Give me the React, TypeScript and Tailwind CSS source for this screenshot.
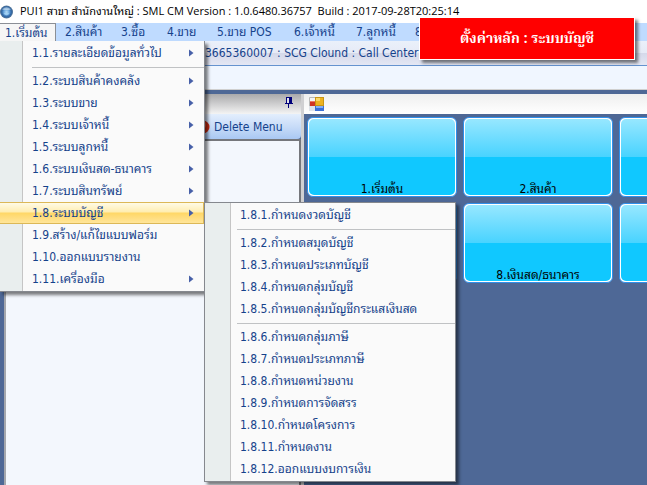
import React from "react";

type Entry = { label: string; sub?: boolean; active?: boolean; divider?: boolean };

const menuBar = [
  { label: "1.เริ่มต้น", width: "w-[56px]", active: true },
  { label: "2.สินค้า", width: "w-[56px]" },
  { label: "3.ซื้อ", width: "w-[46px]" },
  { label: "4.ขาย", width: "w-[50px]" },
  { label: "5.ขาย POS", width: "w-[77px]" },
  { label: "6.เจ้าหนี้", width: "w-[62px]" },
  { label: "7.ลูกหนี้", width: "w-[59px]" },
  { label: "8", width: "w-[40px]" },
];

const mainMenu: Entry[] = [
  { label: "1.1.รายละเอียดข้อมูลทั่วไป", sub: true, divider: true },
  { label: "1.2.ระบบสินค้าคงคลัง", sub: true },
  { label: "1.3.ระบบขาย", sub: true },
  { label: "1.4.ระบบเจ้าหนี้", sub: true },
  { label: "1.5.ระบบลูกหนี้", sub: true },
  { label: "1.6.ระบบเงินสด-ธนาคาร", sub: true },
  { label: "1.7.ระบบสินทรัพย์", sub: true },
  { label: "1.8.ระบบบัญชี", sub: true, active: true },
  { label: "1.9.สร้าง/แก้ไขแบบฟอร์ม" },
  { label: "1.10.ออกแบบรายงาน" },
  { label: "1.11.เครื่องมือ", sub: true },
];

const accountMenu: Entry[] = [
  { label: "1.8.1.กำหนดงวดบัญชี", divider: true },
  { label: "1.8.2.กำหนดสมุดบัญชี" },
  { label: "1.8.3.กำหนดประเภทบัญชี" },
  { label: "1.8.4.กำหนดกลุ่มบัญชี" },
  { label: "1.8.5.กำหนดกลุ่มบัญชีกระแสเงินสด", divider: true },
  { label: "1.8.6.กำหนดกลุ่มภาษี" },
  { label: "1.8.7.กำหนดประเภทภาษี" },
  { label: "1.8.8.กำหนดหน่วยงาน" },
  { label: "1.8.9.กำหนดการจัดสรร" },
  { label: "1.8.10.กำหนดโครงการ" },
  { label: "1.8.11.กำหนดงาน" },
  { label: "1.8.12.ออกแบบงบการเงิน" },
];

const tiles = ["1.เริ่มต้น", "2.สินค้า", "", "", "8.เงินสด/ธนาคาร", ""];

function GlobeIcon() {
  return (
    <svg width="14" height="14" viewBox="0 0 14 14" aria-hidden="true">
      <defs>
        <radialGradient id="globe" cx="50%" cy="50%" r="52%">
          <stop offset="0" stopColor="#b5dcf8" />
          <stop offset="0.4" stopColor="#6ba7dd" />
          <stop offset="0.7" stopColor="#2f67a6" />
          <stop offset="1" stopColor="#5c7894" />
        </radialGradient>
      </defs>
      <circle cx="6.5" cy="7" r="6.5" fill="url(#globe)" />
      <path d="M2 4.5Q6.5 0 11 4.5Q6.5 5.5 2 4.5Z" fill="#e3eef6" opacity="0.55" />
      <path d="M3.5 8.5Q6.5 12 9.5 8.5Q6.5 7 3.5 8.5Z" fill="#a9d8f8" opacity="0.7" />
    </svg>
  );
}

function PinIcon() {
  return (
    <svg width="8" height="11" viewBox="0 0 8 11" aria-hidden="true" shapeRendering="crispEdges" fill="#00007b">
      <path d="M1 0h6v6H1z" />
      <path d="M2 1h2v5H2z" fill="#e4e4ec" />
      <path d="M0 6h8v1H0zM3 7h1v4H3z" />
    </svg>
  );
}

function FormIcon() {
  return (
    <svg width="15" height="14" viewBox="0 0 15 14" aria-hidden="true">
      <path d="M0.5 13.5V0.5H6" stroke="#b8b8b8" fill="none" />
      <rect x="0" y="9" width="6" height="5" fill="#dfe3ea" />
      <rect x="1" y="4" width="5" height="5" fill="#d03524" />
      <rect x="1" y="4" width="5" height="1" fill="#ee7a66" />
      <rect x="6" y="0" width="9" height="9" fill="#c89414" />
      <rect x="7" y="1" width="7" height="7" fill="#eeb320" />
      <rect x="7" y="1" width="4" height="3" fill="#fbd768" />
      <rect x="6" y="9" width="9" height="5" fill="#3b6fd6" />
      <rect x="7" y="9" width="7" height="2" fill="#86b0f5" />
    </svg>
  );
}

function Menu({ items, textStart }: { items: Entry[]; textStart: string }) {
  return (
    <ul className="py-px">
      {items.map((item) => (
        <li key={item.label}>
          <button
            type="button"
            className={`flex h-[22px] w-full items-center justify-between whitespace-nowrap text-left ${textStart} ${
              item.active
                ? "border border-l-0 border-[#dcb857] bg-[linear-gradient(#fffbe6,#ffedb0_45%,#ffd766_50%,#ffe59a)] pr-[9px]"
                : "pr-2.5"
            }`}
          >
            <span>{item.label}</span>
            {item.sub && (
              <svg width="5" height="8" viewBox="0 0 5 8" aria-hidden="true">
                <path d="M0 0.5L4.5 4L0 7.5Z" fill="#4760a8" />
              </svg>
            )}
          </button>
          {item.divider && (
            <div className="flex h-1.5 items-center pl-8">
              <div className="h-px w-full bg-[#c0c2c4]" />
            </div>
          )}
        </li>
      ))}
    </ul>
  );
}

export default function App() {
  return (
    <div className="relative flex h-screen flex-col overflow-hidden bg-[#4e6896] font-['DejaVu_Sans_Condensed','Noto_Sans_Thai_Looped',sans-serif] text-xs text-[#15428b]">
      <header className="flex h-[23px] shrink-0 items-center gap-1.5 bg-white font-['Open_Sans','Noto_Sans_Thai_Looped',sans-serif] text-[11px] text-black">
        <GlobeIcon />
        <h1 className="whitespace-pre">
          PUI1 สาขา สำนักงานใหญ่ : SML CM Version : 1.0.6480.36757  Build : 2017-09-28T20:25:14
        </h1>
      </header>

      <nav className="flex h-[18px] shrink-0 bg-[#bfdbff]">
        {menuBar.map((m) => (
          <button
            key={m.label}
            type="button"
            className={`shrink-0 whitespace-nowrap text-left leading-4 ${m.width} ${
              m.active ? "border-t border-r border-[#8b8f96] bg-[#f6f6f6] pl-[5px]" : "pl-[9px]"
            }`}
          >
            {m.label}
          </button>
        ))}
      </nav>

      <div className="flex h-[25px] shrink-0 items-center border-b border-[#6593cf] bg-[linear-gradient(#eaf0fa,#e6eaf6_50%,#d5d9ea_52%,#e4e7f4)] pl-[205px]">
        <span className="whitespace-nowrap">3665360007 : SCG Clound : Call Center</span>
      </div>
      <div className="h-6 shrink-0 border-b border-[#d0d0d0] bg-[#f0f6ff]" />

      <div className="flex min-h-0 flex-1 pt-1">
        <aside className="flex w-[301px] shrink-0 flex-col pl-1">
          <div className="flex h-5 shrink-0 items-start justify-end bg-[linear-gradient(#a9a9ab,#f4f4f4)] pt-[3px] pr-2">
            <PinIcon />
          </div>
          <div className="flex h-[25px] shrink-0 items-center rounded-br bg-[linear-gradient(#e3eefd,#c8dcf8_50%,#a9c8f3)] pl-[194px]">
            <button type="button" className="flex items-center gap-1 whitespace-nowrap">
              <svg width="12" height="14" viewBox="0 0 12 14" aria-hidden="true">
                <circle cx="5" cy="7" r="6.5" fill="#c5290f" />
                <circle cx="4" cy="5" r="4" fill="#e5593c" />
              </svg>
              Delete Menu
            </button>
          </div>
          <div className="flex-1 border-x-2 border-t-2 border-[#75777c] border-l-[#a4a7ad] bg-[#f3f7fd]" />
        </aside>
        <div className="w-[3px] shrink-0 bg-[#d0d0d2]" />
        <main className="min-w-0 flex-1 overflow-hidden">
          <div className="flex h-5 items-center bg-[linear-gradient(#efefef,#ffffff)] pl-[5px]">
            <FormIcon />
          </div>
          <div className="grid grid-cols-[150px_150px_150px] gap-x-1.5 gap-y-1.5 pt-[3px] pl-[3px]">
            {tiles.map((t, i) => (
              <button
                key={i}
                type="button"
                className="flex h-20 items-end justify-center rounded-md border border-[#2f8fea] bg-white p-px text-black"
              >
                <span className="flex h-full w-full items-end justify-center rounded-[5px] bg-[linear-gradient(#97e7ff,#48d3ff_50%,#10c8ff_50%)] leading-3">
                  {t}
                </span>
              </button>
            ))}
          </div>
        </main>
      </div>

      <div className="absolute top-[41px] left-0 w-[205px] border-r border-b border-[#85888e] bg-[linear-gradient(90deg,#e9eeee_22px,#c5c5c5_22px,#c5c5c5_23px,#fafafa_23px)] shadow-[3px_3px_3px_rgba(0,0,0,0.5)]">
        <Menu items={mainMenu} textStart="pl-8" />
      </div>

      <div className="absolute top-[202px] left-[204px] w-[252px] border border-[#85888e] bg-[linear-gradient(90deg,#e9eeee_25px,#c5c5c5_25px,#c5c5c5_26px,#fafafa_26px)] shadow-[3px_3px_3px_rgba(0,0,0,0.5)]">
        <Menu items={accountMenu} textStart="pl-[35px]" />
      </div>

      <div className="absolute top-[17px] left-[419px] flex h-[43px] w-[216px] items-center justify-center border border-white bg-[#ff0000] font-['Noto_Serif_Thai','Noto_Sans_Thai_Looped',serif] text-sm font-bold text-white shadow-[3px_3px_3px_rgba(0,0,0,0.5)]">
        ตั้งค่าหลัก : ระบบบัญชี
      </div>
    </div>
  );
}
